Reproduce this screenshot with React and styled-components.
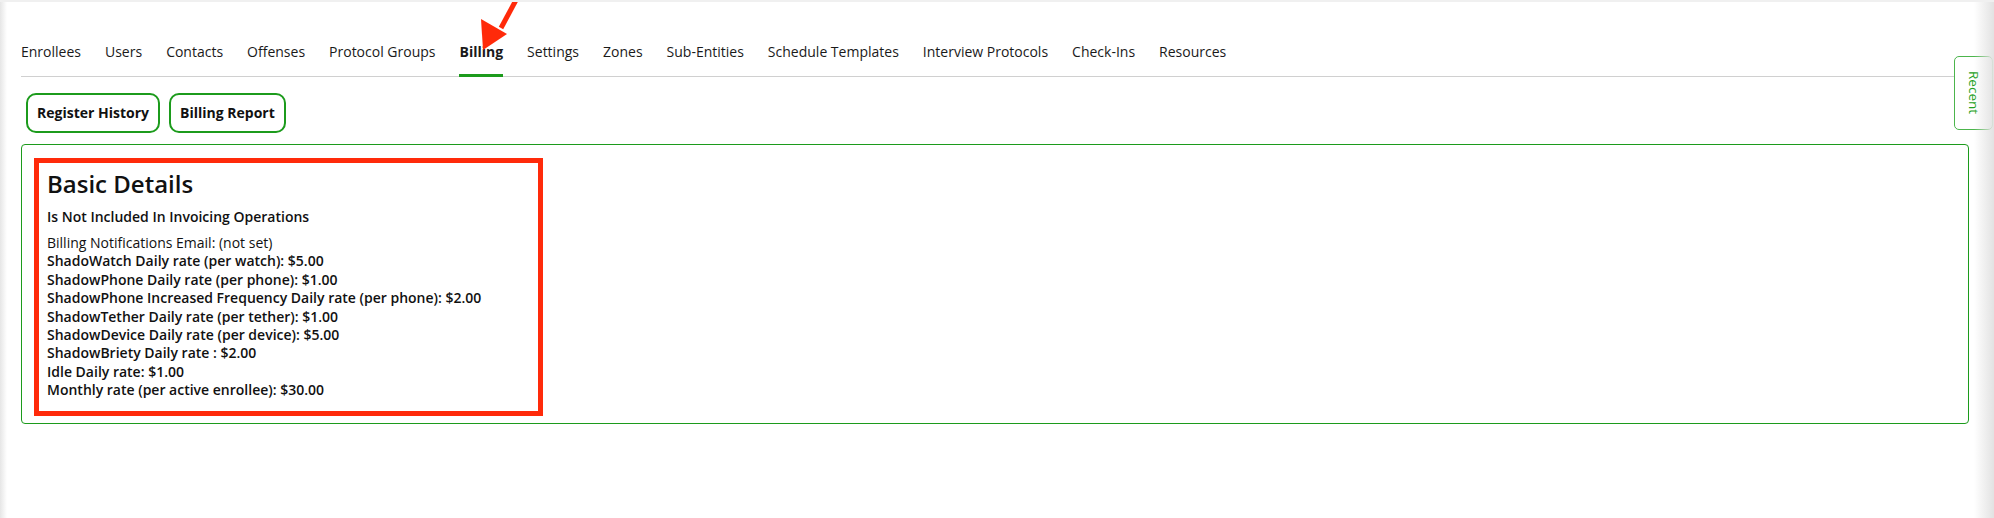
import React from "react";
import styled, { createGlobalStyle } from "styled-components";

const GREEN = "#1c9b1c";

const tabs = [
  "Enrollees",
  "Users",
  "Contacts",
  "Offenses",
  "Protocol Groups",
  "Billing",
  "Settings",
  "Zones",
  "Sub-Entities",
  "Schedule Templates",
  "Interview Protocols",
  "Check-Ins",
  "Resources",
];

const rates = [
  "ShadoWatch Daily rate (per watch): $5.00",
  "ShadowPhone Daily rate (per phone): $1.00",
  "ShadowPhone Increased Frequency Daily rate (per phone): $2.00",
  "ShadowTether Daily rate (per tether): $1.00",
  "ShadowDevice Daily rate (per device): $5.00",
  "ShadowBriety Daily rate : $2.00",
  "Idle Daily rate: $1.00",
  "Monthly rate (per active enrollee): $30.00",
];

const App = () => {
  return (
    <Page>
      <GlobalStyle />
      <Nav>
        {tabs.map((t) => (
          <Tab key={t} $active={t === "Billing"}>
            {t}
          </Tab>
        ))}
      </Nav>
      <Actions>
        <ActionButton>Register History</ActionButton>
        <ActionButton>Billing Report</ActionButton>
      </Actions>
      <Card>
        <Highlight>
          <Heading>Basic Details</Heading>
          <Status>Is Not Included In Invoicing Operations</Status>
          <Lines>
            <Line>Billing Notifications Email: (not set)</Line>
            {rates.map((r) => (
              <Line key={r} $bold>
                {r}
              </Line>
            ))}
          </Lines>
        </Highlight>
      </Card>
      <RecentTab>Recent</RecentTab>
      {/* annotation arrow pointing at the Billing tab */}
      <Arrow viewBox="0 0 50 52" preserveAspectRatio="none">
        <path d="M44 0 L29 28" stroke="#ff2a0a" strokeWidth="5" fill="none" />
        <path d="M9 19 L35 34 L11 50 Z" fill="#ff2a0a" />
      </Arrow>
      <EdgeShade />
    </Page>
  );
};

export default App;

const GlobalStyle = createGlobalStyle`
  html, body {
    margin: 0;
    padding: 0;
    background: #fff;
  }
  body {
    font-family: "Open Sans", "Noto Sans", sans-serif;
    color: #111;
  }
  * {
    box-sizing: border-box;
  }
`;

const Page = styled.div`
  position: relative;
  width: 1994px;
  height: 518px;
  padding: 42px 25px 0 21px;
  overflow: hidden;
  background: #fff;
`;

const EdgeShade = styled.div`
  position: absolute;
  inset: 0;
  pointer-events: none;
  background:
    linear-gradient(to bottom, #f0f0f0 0, #f0f0f0 2px, rgba(255, 255, 255, 0) 2px),
    linear-gradient(to right, #e6e6e6 0, rgba(255, 255, 255, 0) 7px),
    linear-gradient(to left, #e2e2e2 0, rgba(255, 255, 255, 0) 20px);
`;

const Nav = styled.div`
  display: flex;
  gap: 24px;
  border-bottom: 1px solid #d0d0d0;
`;

const Tab = styled.div`
  font-size: 14px;
  line-height: 20px;
  padding-bottom: 12px;
  margin-bottom: -1px;
  color: #1a1a1a;
  font-weight: ${(p) => (p.$active ? 700 : 400)};
  border-bottom: 3px solid ${(p) => (p.$active ? GREEN : "transparent")};
  white-space: nowrap;
  cursor: pointer;
`;

const Actions = styled.div`
  display: flex;
  gap: 9px;
  margin: 16px 0 0 5px;
`;

const ActionButton = styled.button`
  font-family: inherit;
  font-size: 14px;
  font-weight: 700;
  line-height: 20px;
  color: #111;
  background: #fff;
  border: 2px solid ${GREEN};
  border-radius: 10px;
  padding: 8px 9px;
  cursor: pointer;
`;

const Card = styled.div`
  margin-top: 11px;
  border: 1px solid ${GREEN};
  border-radius: 4px;
  padding: 13px 12px 7px;
`;

const Highlight = styled.div`
  width: 509px;
  border: 5px solid #ff2a0a;
  padding: 6px 8px 11px;
`;

const Heading = styled.h2`
  margin: 0;
  font-size: 24px;
  line-height: 29px;
  font-weight: 600;
`;

const Status = styled.div`
  margin-top: 9px;
  font-size: 14px;
  line-height: 19px;
  font-weight: 600;
`;

const Lines = styled.div`
  margin-top: 8px;
`;

const Line = styled.div`
  font-size: 14px;
  line-height: 18.4px;
  font-weight: ${(p) => (p.$bold ? 600 : 400)};
  white-space: nowrap;
`;

const RecentTab = styled.div`
  position: absolute;
  top: 56px;
  right: 1px;
  width: 39px;
  height: 74px;
  display: flex;
  align-items: center;
  justify-content: center;
  background: #fff;
  border: 1px solid #4cb54c;
  border-radius: 5px;
  color: #22a022;
  font-size: 13.5px;
  writing-mode: vertical-rl;
`;

const Arrow = styled.svg`
  position: absolute;
  left: 472px;
  top: 0;
  width: 50px;
  height: 52px;
  display: block;
`;
